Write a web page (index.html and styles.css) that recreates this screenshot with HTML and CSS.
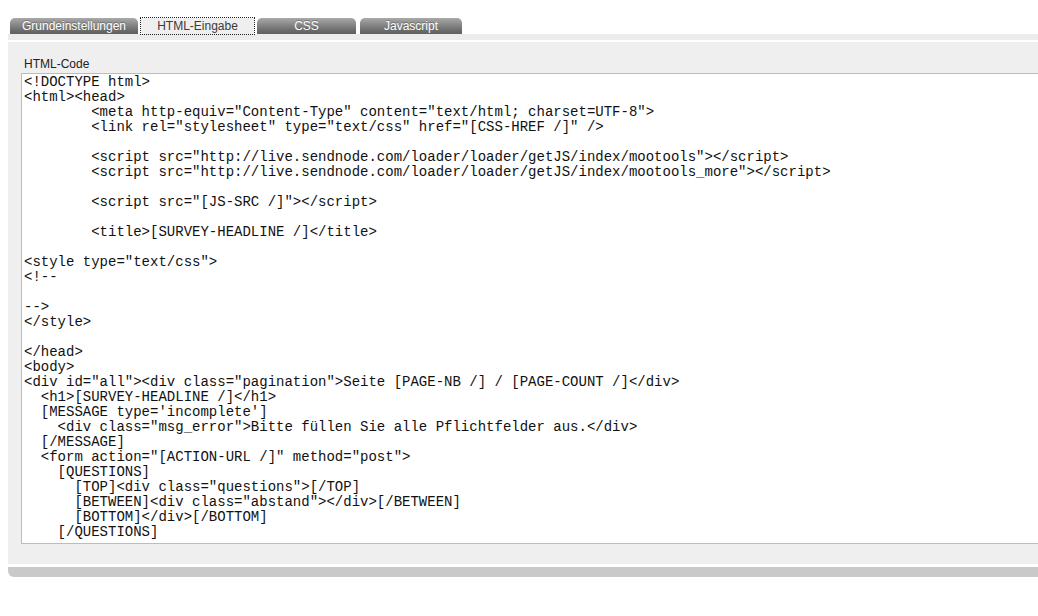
FILE: index.html
```html
<!DOCTYPE html>
<html lang="de">
<head>
<meta charset="UTF-8">
<title>HTML-Eingabe</title>
<link rel="stylesheet" href="styles.css">
</head>
<body>
<div class="wrap">
  <div class="tabs">
    <a class="tab tab-1">Grundeinstellungen</a>
    <a class="tab tab-2 active">HTML-Eingabe</a>
    <a class="tab tab-3">CSS</a>
    <a class="tab tab-4">Javascript</a>
  </div>
  <div class="strip"></div>
  <div class="panel">
    <div class="label">HTML-Code</div>
    <div class="code"><pre>&lt;!DOCTYPE html&gt;
&lt;html&gt;&lt;head&gt;
        &lt;meta http-equiv="Content-Type" content="text/html; charset=UTF-8"&gt;
        &lt;link rel="stylesheet" type="text/css" href="[CSS-HREF /]" /&gt;

        &lt;script src="http://live.sendnode.com/loader/loader/getJS/index/mootools"&gt;&lt;/script&gt;
        &lt;script src="http://live.sendnode.com/loader/loader/getJS/index/mootools_more"&gt;&lt;/script&gt;

        &lt;script src="[JS-SRC /]"&gt;&lt;/script&gt;

        &lt;title&gt;[SURVEY-HEADLINE /]&lt;/title&gt;

&lt;style type="text/css"&gt;
&lt;!--

--&gt;
&lt;/style&gt;

&lt;/head&gt;
&lt;body&gt;
&lt;div id="all"&gt;&lt;div class="pagination"&gt;Seite [PAGE-NB /] / [PAGE-COUNT /]&lt;/div&gt;
  &lt;h1&gt;[SURVEY-HEADLINE /]&lt;/h1&gt;
  [MESSAGE type='incomplete']
    &lt;div class="msg_error"&gt;Bitte füllen Sie alle Pflichtfelder aus.&lt;/div&gt;
  [/MESSAGE]
  &lt;form action="[ACTION-URL /]" method="post"&gt;
    [QUESTIONS]
      [TOP]&lt;div class="questions"&gt;[/TOP]
      [BETWEEN]&lt;div class="abstand"&gt;&lt;/div&gt;[/BETWEEN]
      [BOTTOM]&lt;/div&gt;[/BOTTOM]
    [/QUESTIONS]</pre></div>
  </div>
  <div class="bottom-bar"></div>
</div>
</body>
</html>
```

FILE: styles.css
```css
html {
  overflow: hidden;
}
body {
  margin: 0;
  background: #fff;
  font-family: "Liberation Sans", Arial, Helvetica, sans-serif;
}
.wrap {
  width: 1100px;
  margin-left: 8px;
  padding-top: 18px;
}
.tabs {
  display: flex;
  padding-left: 2px;
  height: 16px;
}
.tab {
  display: block;
  height: 16px;
  line-height: 16px;
  font-size: 12px;
  text-align: center;
  color: #fff;
  border-radius: 5px 5px 0 0;
  background: linear-gradient(#a9a9a9 0%, #858585 45%, #6a6a6a 80%, #5f5f5f 100%);
  text-shadow: 0 -1px 0 rgba(0,0,0,0.25);
  box-sizing: border-box;
}
.tab-1 { width: 128px; margin-right: 3px; }
.tab-2 { width: 113px; margin-right: 3px; }
.tab-3 { width: 99px; margin-right: 4px; }
.tab-4 { width: 102px; }
.tab.active {
  background: #efefef;
  color: #3a3a3a;
  text-shadow: none;
  border-radius: 0;
  outline: 1px dotted #222;
  outline-offset: 0;
}
.strip {
  height: 6px;
  background: #ececec;
}
.panel {
  margin-top: 2px;
  background: #efefef;
  padding: 15px 0 20px 13px;
}
.label {
  font-size: 12px;
  line-height: 14px;
  color: #222;
  padding-left: 3px;
  margin-bottom: 2px;
}
.code {
  background: #fff;
  border: 1px solid #bcbcbc;
  height: 469px;
  overflow: hidden;
  padding: 0 2px;
}
.code pre {
  margin: 0;
  padding-top: 1px;
  font-family: "Liberation Mono", "Courier New", Courier, monospace;
  font-size: 14px;
  line-height: 15px;
  color: #111;
}
.bottom-bar {
  margin-top: 3px;
  height: 10px;
  background: #c9c9c9;
  border-radius: 0 0 0 6px;
}
```
